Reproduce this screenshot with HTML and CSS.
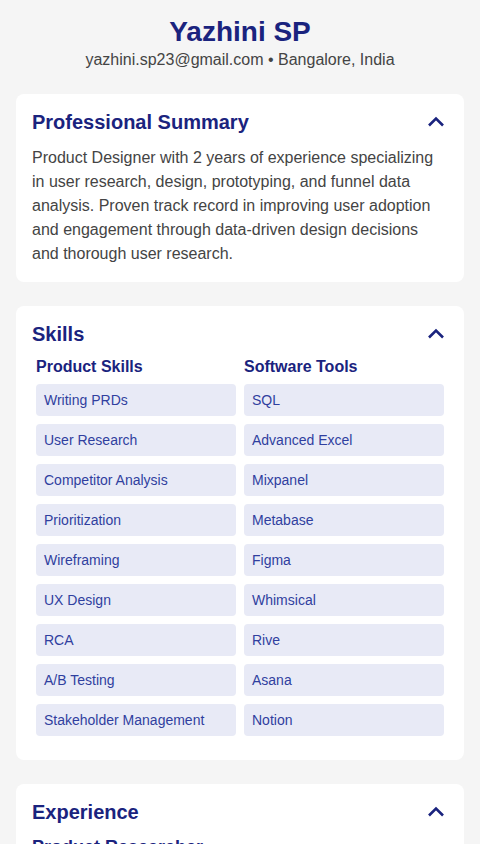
FILE: index.html
```html
<!DOCTYPE html>
<html lang="en">
<head>
  <meta charset="UTF-8">
  <meta name="viewport" content="width=device-width, initial-scale=1.0">
  <title>Yazhini SP - Resume</title>
  <link rel="stylesheet" href="styles.css">
</head>
<body>
  <header class="profile">
    <h1>Yazhini SP</h1>
    <p class="contact">yazhini.sp23@gmail.com • Bangalore, India</p>
  </header>

  <section class="card">
    <div class="card-head">
      <h2>Professional Summary</h2>
      <svg class="chevron" width="24" height="24" viewBox="0 0 24 24"><polyline points="5,15.5 12,8.5 19,15.5"/></svg>
    </div>
    <p class="summary">Product Designer with 2 years of experience specializing in user research, design, prototyping, and funnel data analysis. Proven track record in improving user adoption and engagement through data-driven design decisions and thorough user research.</p>
  </section>

  <section class="card">
    <div class="card-head">
      <h2>Skills</h2>
      <svg class="chevron" width="24" height="24" viewBox="0 0 24 24"><polyline points="5,15.5 12,8.5 19,15.5"/></svg>
    </div>
    <div class="skill-grid">
      <div class="skill-col">
        <h3>Product Skills</h3>
        <div class="chip">Writing PRDs</div>
        <div class="chip">User Research</div>
        <div class="chip">Competitor Analysis</div>
        <div class="chip">Prioritization</div>
        <div class="chip">Wireframing</div>
        <div class="chip">UX Design</div>
        <div class="chip">RCA</div>
        <div class="chip">A/B Testing</div>
        <div class="chip">Stakeholder Management</div>
      </div>
      <div class="skill-col">
        <h3>Software Tools</h3>
        <div class="chip">SQL</div>
        <div class="chip">Advanced Excel</div>
        <div class="chip">Mixpanel</div>
        <div class="chip">Metabase</div>
        <div class="chip">Figma</div>
        <div class="chip">Whimsical</div>
        <div class="chip">Rive</div>
        <div class="chip">Asana</div>
        <div class="chip">Notion</div>
      </div>
    </div>
  </section>

  <section class="card">
    <div class="card-head">
      <h2>Experience</h2>
      <svg class="chevron" width="24" height="24" viewBox="0 0 24 24"><polyline points="5,15.5 12,8.5 19,15.5"/></svg>
    </div>
    <h3 class="role">Product Researcher</h3>
    <p class="summary">Conducted user interviews and usability tests to uncover pain points and inform product decisions.</p>
  </section>
</body>
</html>
```

FILE: styles.css
```css
* { margin: 0; padding: 0; box-sizing: border-box; }

body {
  font-family: "Liberation Sans", Arial, sans-serif;
  background: #f5f5f5;
  color: #444;
  padding: 16px 16px 24px;
}

/* Header */
.profile {
  text-align: center;
  margin-bottom: 22px;
}

.profile h1 {
  font-size: 28px;
  line-height: 32px;
  color: #1a237e;
  font-weight: bold;
}

.contact {
  font-size: 16px;
  line-height: 24px;
  color: #444;
}

/* Cards */
.card {
  background: #fff;
  border-radius: 8px;
  padding: 16px;
  margin-bottom: 24px;
}

.card-head {
  display: flex;
  justify-content: space-between;
  align-items: center;
  margin-bottom: 12px;
}

.card-head h2 {
  font-size: 20px;
  line-height: 24px;
  color: #1a237e;
  font-weight: bold;
}

.chevron polyline {
  fill: none;
  stroke: #1a237e;
  stroke-width: 2.6;
}

.summary {
  font-size: 16px;
  line-height: 24px;
  color: #444;
}

/* Skills */
.skill-grid {
  display: grid;
  grid-template-columns: 1fr 1fr;
  gap: 8px;
  padding: 0 4px 8px;
}

.skill-col {
  display: flex;
  flex-direction: column;
  gap: 8px;
}

.skill-col h3 {
  font-size: 16px;
  line-height: 18px;
  color: #1a237e;
  font-weight: bold;
}

.chip {
  background: #e8eaf6;
  color: #303f9f;
  font-size: 14px;
  line-height: 32px;
  height: 32px;
  padding: 0 8px;
  border-radius: 4px;
}

.role {
  font-size: 18px;
  line-height: 22px;
  color: #1a237e;
  margin-bottom: 8px;
}
```
